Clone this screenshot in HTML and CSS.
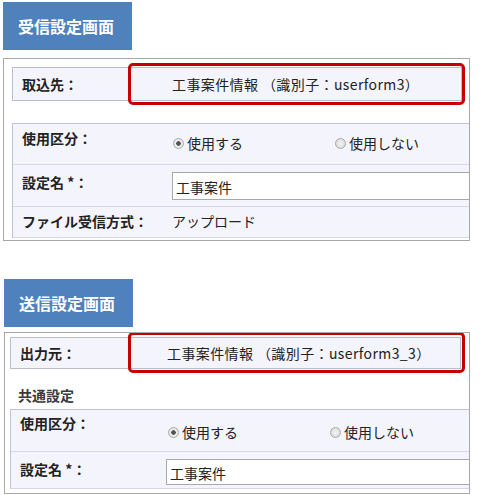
FILE: index.html
```html
<!DOCTYPE html>
<html lang="ja">
<head>
    <meta charset="UTF-8">
    <title>受信設定画面 / 送信設定画面</title>
    <link rel="stylesheet" href="styles.css">
</head>
<body>
    <section class="screen screen-receive">
        <div class="screen-title">受信設定画面</div>
        <div class="panel">
            <div class="source-row">
                <div class="source-label">取込先：</div>
                <div class="source-value">工事案件情報 （識別子：userform3）</div>
                <div class="highlight"></div>
            </div>
            <div class="settings">
                <div class="row row-usage">
                    <div class="label">使用区分：</div>
                    <div class="value radios">
                        <span class="option"><span class="radio checked"></span>使用する</span>
                        <span class="option"><span class="radio"></span>使用しない</span>
                    </div>
                </div>
                <div class="row row-name">
                    <div class="label">設定名 *：</div>
                    <div class="value"><div class="text-input">工事案件</div></div>
                </div>
                <div class="row row-method">
                    <div class="label">ファイル受信方式：</div>
                    <div class="value">アップロード</div>
                </div>
            </div>
        </div>
    </section>

    <section class="screen screen-send">
        <div class="screen-title">送信設定画面</div>
        <div class="panel">
            <div class="source-row">
                <div class="source-label">出力元：</div>
                <div class="source-value">工事案件情報 （識別子：userform3_3）</div>
                <div class="highlight"></div>
            </div>
            <div class="group-title">共通設定</div>
            <div class="settings">
                <div class="row row-usage">
                    <div class="label">使用区分：</div>
                    <div class="value radios">
                        <span class="option"><span class="radio checked"></span>使用する</span>
                        <span class="option"><span class="radio"></span>使用しない</span>
                    </div>
                </div>
                <div class="row row-name">
                    <div class="label">設定名 *：</div>
                    <div class="value"><div class="text-input">工事案件</div></div>
                </div>
            </div>
        </div>
    </section>
</body>
</html>
```

FILE: styles.css
```css
body, html {
    margin: 0;
    padding: 0;
    background-color: #ffffff;
    font-family: "Noto Sans CJK JP", "Liberation Sans", sans-serif;
    font-size: 14px;
    color: #222;
}

body {
    padding-top: 2px;
}

.screen-title {
    width: 129px;
    height: 48px;
    line-height: 48px;
    background-color: #4f81bd;
    color: #fff;
    font-size: 16px;
    font-weight: bold;
    text-align: center;
    padding-right: 3px;
    box-sizing: border-box;
}

.panel {
    border: 1px solid #a8a8a8;
    box-sizing: border-box;
    overflow: hidden;
}

/* source row with red highlight */
.source-row {
    position: relative;
    display: flex;
    background-color: #f4f4fc;
    border: 1px solid #bcbcca;
    line-height: 32px;
}

.source-label {
    font-weight: bold;
    padding-left: 9px;
    box-sizing: border-box;
}

.source-value {
    color: #222;
    white-space: nowrap;
    letter-spacing: 0.4px;
}

.highlight {
    position: absolute;
    border: 3px solid #c40000;
    border-radius: 5px;
    box-sizing: border-box;
    width: 337px;
}

/* settings table */
.settings {
    border-top: 1px solid #c2c2d2;
    border-left: 1px solid #c2c2d2;
}

.row {
    display: flex;
    background-color: #f4f4fc;
    border-bottom: 1px solid #d6d6ec;
    line-height: 20px;
}

.label {
    font-weight: bold;
    padding-left: 9px;
    box-sizing: border-box;
    flex-shrink: 0;
}

.value {
    flex-grow: 1;
    white-space: nowrap;
    color: #222;
}

.radios {
    display: flex;
    align-items: flex-start;
}

.option {
    display: flex;
    align-items: center;
    width: 162px;
    height: 20px;
}

.radio {
    width: 11px;
    height: 11px;
    border-radius: 50%;
    border: 1px solid #aaa;
    box-sizing: border-box;
    margin-right: 3px;
    background: radial-gradient(circle, #f4f4f4 0, #d4d4d4 100%);
}

.radio.checked {
    background: radial-gradient(circle, #555 0 2px, #f4f4f4 2.6px, #d0d0d0 100%);
}

.text-input {
    width: 320px;
    background-color: #fff;
    border: 1px solid #a9a9a9;
    box-sizing: border-box;
    padding-left: 3px;
}

.group-title {
    font-weight: bold;
    color: #3a3a3a;
    line-height: 20px;
    padding-left: 8px;
}

/* receive screen */
.screen-receive .screen-title {
    margin-left: 3px;
}

.screen-receive .panel {
    margin: 8px 0 0 3px;
    width: 467px;
    padding: 8px 0 2px 8px;
}

.screen-receive .source-row {
    margin-right: 7px;
}

.screen-receive .source-label {
    width: 159px;
}

.screen-receive .highlight {
    left: 115px;
    top: -5px;
    height: 42px;
}

.screen-receive .settings {
    margin-top: 22px;
}

.screen-receive .label {
    width: 159px;
}

.screen-receive .row-usage {
    height: 40px;
}

.screen-receive .row-usage .label {
    padding-top: 4px;
}

.screen-receive .row-usage .radios {
    padding-top: 9px;
    padding-left: 1px;
}

.screen-receive .row-name {
    height: 41px;
}

.screen-receive .row-name .label {
    padding-top: 7px;
}

.screen-receive .row-name .text-input {
    margin-top: 7px;
    height: 28px;
    line-height: 26px;
    padding-top: 1px;
}

.screen-receive .row-method {
    height: 30px;
}

.screen-receive .row-method .label {
    padding-top: 4px;
}

.screen-receive .row-method .value {
    padding-top: 4px;
}

/* send screen */
.screen-send {
    margin-top: 38px;
}

.screen-send .screen-title {
    margin-left: 4px;
}

.screen-send .panel {
    margin: 5px 0 0 4px;
    width: 466px;
    padding: 4px 0 4px 5px;
}

.screen-send .source-row {
    margin-right: 8px;
    line-height: 30px;
}

.screen-send .source-label {
    width: 156px;
}

.screen-send .highlight {
    left: 117px;
    top: -6px;
    height: 41px;
}

.screen-send .group-title {
    margin-top: 16px;
    margin-bottom: 4px;
}

.screen-send .label {
    width: 155px;
}

.screen-send .row-usage {
    height: 41px;
}

.screen-send .row-usage .label {
    padding-top: 3px;
}

.screen-send .row-usage .radios {
    padding-top: 12px;
    padding-left: 2px;
}

.screen-send .row-name {
    height: 36px;
}

.screen-send .row-name .label {
    padding-top: 7px;
}

.screen-send .row-name .text-input {
    margin-top: 7px;
    height: 26px;
    line-height: 24px;
    padding-top: 1px;
}
```
